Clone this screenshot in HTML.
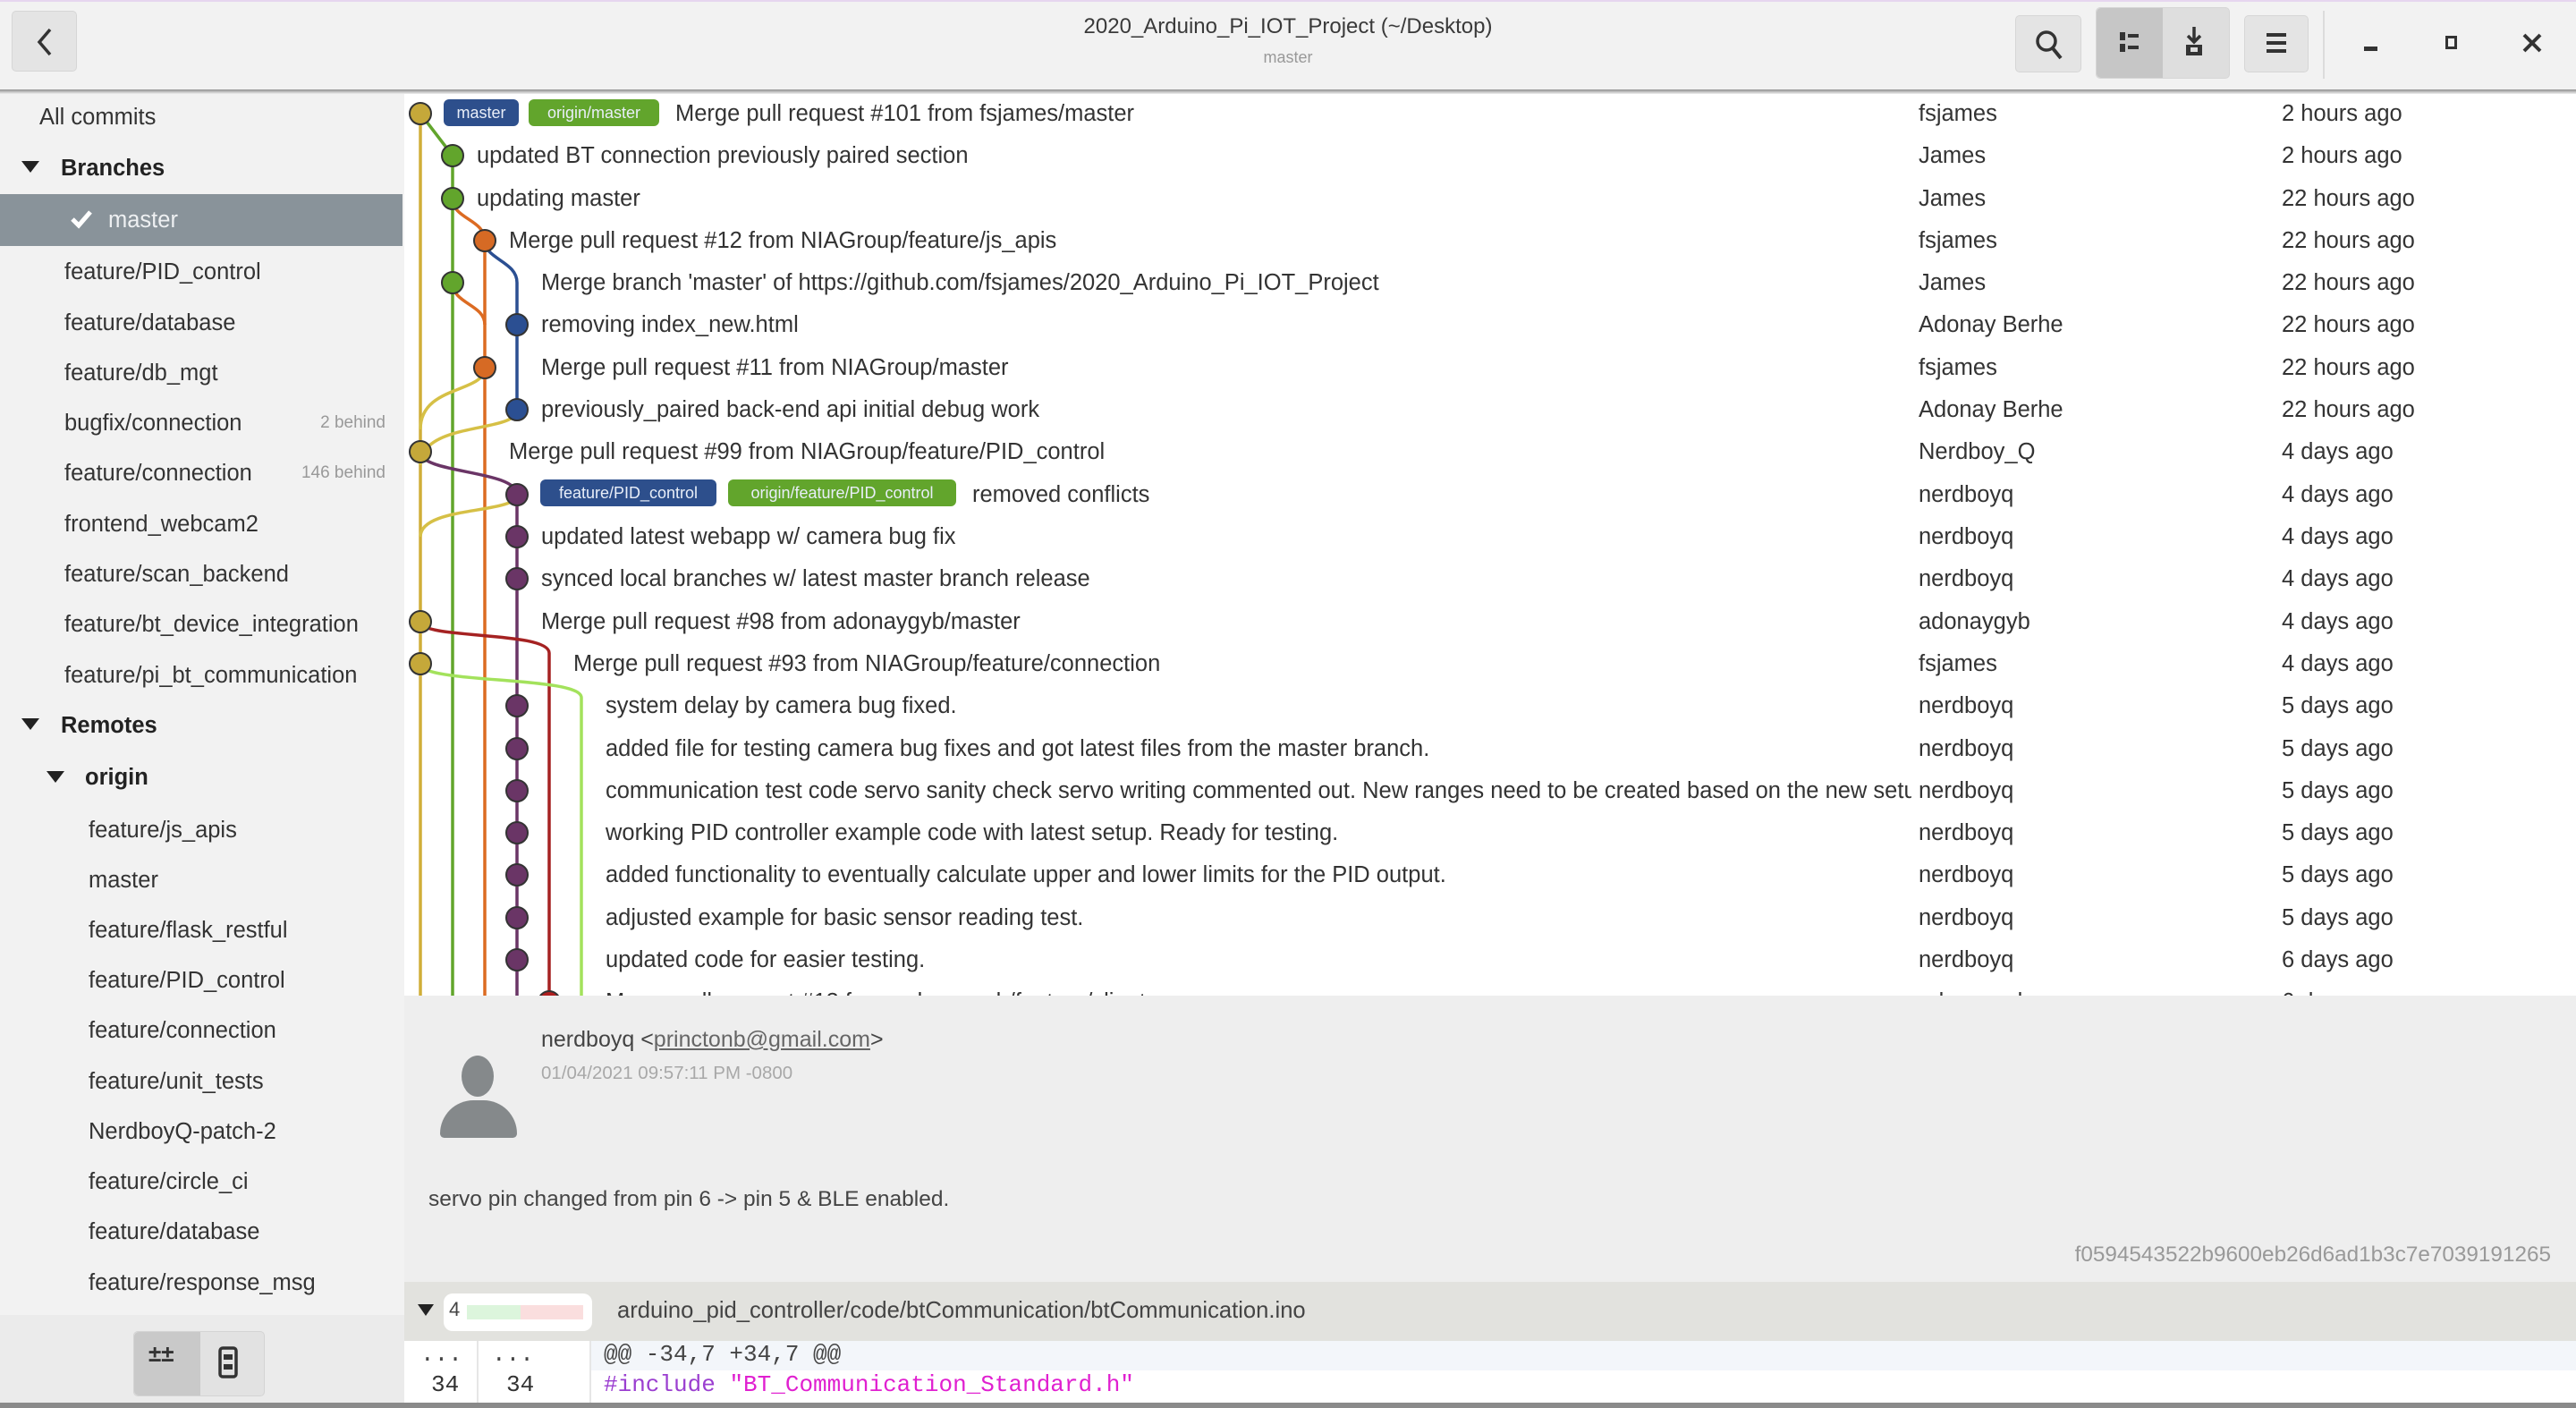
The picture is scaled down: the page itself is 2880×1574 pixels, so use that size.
<!DOCTYPE html>
<html><head><meta charset="utf-8"><style>
*{margin:0;padding:0;box-sizing:border-box}
body{width:2880px;height:1574px;overflow:hidden;background:#fff;font-family:"Liberation Sans",sans-serif;color:#333;position:relative}
.a{position:absolute;white-space:nowrap}
.hdr{left:0;top:0;width:2880px;height:101px;background:#f2f2f2;border-top:2px solid #e6d6ef}
.sep{left:0;top:100px;width:2880px;height:5px;background:linear-gradient(#8f8f8f,#c8c8c8 60%,#efefef)}
.btn{background:#e4e4e4;border:1px solid #d6d6d6;border-radius:5px}
.side{left:0;top:105px;width:452px;height:1469px;background:#f2f2f2}
.si{font-size:25.5px;line-height:40px;color:#333}
.row{font-size:25.5px;line-height:40px;color:#333}
.pill{font-size:18px;color:#e8eef8;border-radius:6px;line-height:30px;padding:0 10px;text-align:center}
</style></head><body>
<div class="a hdr"></div>
<div class="a btn" style="left:13px;top:12px;width:73px;height:68px"></div>
<svg class="a" style="left:38px;top:30px" width="24" height="34"><path d="M18 3 L6 17 L18 31" stroke="#333" stroke-width="3.5" fill="none"/></svg>
<div class="a" style="left:1000px;top:16px;width:880px;text-align:center;font-size:24px;color:#3a3a3a">2020_Arduino_Pi_IOT_Project (~/Desktop)</div>
<div class="a" style="left:1000px;top:54px;width:880px;text-align:center;font-size:18px;color:#999">master</div>
<div class="a btn" style="left:2253px;top:17px;width:74px;height:64px"></div>
<svg class="a" style="left:2274px;top:32px" width="34" height="36"><circle cx="14" cy="14" r="10" stroke="#333" stroke-width="3.5" fill="none"/><path d="M21 22 L30 33" stroke="#333" stroke-width="4"/></svg>
<div class="a btn" style="left:2343px;top:8px;width:150px;height:80px;background:#dedede"></div>
<div class="a" style="left:2344px;top:9px;width:74px;height:78px;background:#c6c6c6;border-radius:5px 0 0 5px"></div>
<svg class="a" style="left:2367px;top:34px" width="30" height="28"><rect x="3" y="2" width="6" height="9" fill="#333"/><rect x="12" y="4" width="12" height="4" fill="#333"/><rect x="3" y="15" width="6" height="9" fill="#333"/><rect x="12" y="17" width="12" height="4" fill="#333"/></svg>
<svg class="a" style="left:2440px;top:28px" width="30" height="40"><path d="M13 2 V18 M6 12 L13 19 L20 12" stroke="#333" stroke-width="3.5" fill="none"/><rect x="4" y="22" width="18" height="12" fill="#333"/><rect x="9" y="25" width="8" height="5" fill="#ddd"/></svg>
<div class="a btn" style="left:2509px;top:17px;width:72px;height:64px"></div>
<svg class="a" style="left:2532px;top:35px" width="28" height="28"><rect x="2" y="2" width="22" height="4" fill="#333"/><rect x="2" y="11" width="22" height="4" fill="#333"/><rect x="2" y="20" width="22" height="4" fill="#333"/></svg>
<div class="a" style="left:2597px;top:12px;width:2px;height:76px;background:#dcdcdc"></div>
<div class="a" style="left:2643px;top:52px;width:15px;height:5px;background:#333"></div>
<div class="a" style="left:2734px;top:40px;width:13px;height:15px;border:3px solid #333"></div>
<svg class="a" style="left:2819px;top:36px" width="24" height="24"><path d="M3 3 L21 21 M21 3 L3 21" stroke="#333" stroke-width="4"/></svg>
<div class="a sep"></div>

<div class="a side"></div>
<div class="a" style="left:0;top:217px;width:450px;height:58px;background:#89939a"></div>
<div class="a" style="left:0;top:1470px;width:452px;height:104px;background:#ebebeb"></div>
<div class="a" style="left:149px;top:1488px;width:147px;height:73px;background:#e2e2e2;border:1px solid #d4d4d4;border-radius:5px"></div>
<div class="a" style="left:150px;top:1489px;width:74px;height:71px;background:#c9c9c9;border-radius:5px 0 0 5px"></div>
<div class="a" style="left:166px;top:1502px;font-size:26px;font-weight:bold;color:#333;line-height:22px">±±</div>
<svg class="a" style="left:244px;top:1505px" width="22" height="38"><rect x="2" y="2" width="18" height="32" rx="3" stroke="#333" stroke-width="3.5" fill="none"/><rect x="6" y="9" width="10" height="6" fill="#333"/><rect x="6" y="20" width="10" height="6" fill="#333"/></svg>

<div class="a si" style="left:44px;top:111px">All commits</div>
<svg class="a" style="left:24px;top:180px" width="20" height="14"><path d="M0 0 H20 L10 13Z" fill="#222"/></svg>
<div class="a si" style="left:68px;top:168px;font-weight:bold;color:#222">Branches</div>
<svg class="a" style="left:78px;top:233px" width="26" height="24"><path d="M3 12 L10 19 L23 4" stroke="#fff" stroke-width="5" fill="none"/></svg>
<div class="a si" style="left:121px;top:226px;color:#eef0f2">master</div>
<div class="a si" style="left:72px;top:284px">feature/PID_control</div>
<div class="a si" style="left:72px;top:341px">feature/database</div>
<div class="a si" style="left:72px;top:397px">feature/db_mgt</div>
<div class="a si" style="left:72px;top:453px">bugfix/connection</div>
<div class="a" style="left:300px;top:453px;width:131px;text-align:right;font-size:19px;line-height:40px;color:#999">2 behind</div>
<div class="a si" style="left:72px;top:509px">feature/connection</div>
<div class="a" style="left:300px;top:509px;width:131px;text-align:right;font-size:19px;line-height:40px;color:#999">146 behind</div>
<div class="a si" style="left:72px;top:566px">frontend_webcam2</div>
<div class="a si" style="left:72px;top:622px">feature/scan_backend</div>
<div class="a si" style="left:72px;top:678px">feature/bt_device_integration</div>
<div class="a si" style="left:72px;top:735px">feature/pi_bt_communication</div>
<svg class="a" style="left:24px;top:803px" width="20" height="14"><path d="M0 0 H20 L10 13Z" fill="#222"/></svg>
<div class="a si" style="left:68px;top:791px;font-weight:bold;color:#222">Remotes</div>
<svg class="a" style="left:52px;top:862px" width="20" height="14"><path d="M0 0 H20 L10 13Z" fill="#222"/></svg>
<div class="a si" style="left:95px;top:849px;font-weight:bold;color:#222">origin</div>
<div class="a si" style="left:99px;top:908px">feature/js_apis</div>
<div class="a si" style="left:99px;top:964px">master</div>
<div class="a si" style="left:99px;top:1020px">feature/flask_restful</div>
<div class="a si" style="left:99px;top:1076px">feature/PID_control</div>
<div class="a si" style="left:99px;top:1132px">feature/connection</div>
<div class="a si" style="left:99px;top:1189px">feature/unit_tests</div>
<div class="a si" style="left:99px;top:1245px">NerdboyQ-patch-2</div>
<div class="a si" style="left:99px;top:1301px">feature/circle_ci</div>
<div class="a si" style="left:99px;top:1357px">feature/database</div>
<div class="a si" style="left:99px;top:1414px">feature/response_msg</div>

<div class="a" style="left:452px;top:105px;width:2428px;height:1008px;background:#fff;overflow:hidden">
<svg width="2428" height="1008" viewBox="452 105 2428 1008" style="position:absolute;left:0;top:0">
<g fill="none" stroke-width="3.5">
<path d="M470 127 V1113" stroke="#d0ae38"/>
<path d="M470 127 L506 174 V1113" stroke="#62a52c"/>
<path d="M506 222 C506 245,542 245,542 269 V1113" stroke="#dc6b22"/>
<path d="M542 269 C542 290,578 292,578 316 V458" stroke="#2b4f92"/>
<path d="M506 316 C506 340,542 340,542 363" stroke="#dc6b22"/>
<path d="M542 411 C542 440,470 430,470 480" stroke="#d6c046"/>
<path d="M578 458 C578 485,470 470,470 520" stroke="#d6c046"/>
<path d="M470 505 C470 530,578 525,578 553 V1113" stroke="#6a3566"/>
<path d="M578 553 C578 575,470 565,470 600" stroke="#d6c046"/>
<path d="M470 695 C470 715,614 705,614 730 V1113" stroke="#a52222"/>
<path d="M470 742 C470 765,650 755,650 780 V1113" stroke="#a3e25c"/>
</g>
<g stroke="#333" stroke-width="2">
<circle cx="470" cy="127" r="12" fill="#c5a83a"/>
<circle cx="506" cy="174" r="12" fill="#62a52c"/>
<circle cx="506" cy="222" r="12" fill="#62a52c"/>
<circle cx="542" cy="269" r="12" fill="#d66a24"/>
<circle cx="506" cy="316" r="12" fill="#62a52c"/>
<circle cx="578" cy="363" r="12" fill="#2b4f92"/>
<circle cx="542" cy="411" r="12" fill="#d66a24"/>
<circle cx="578" cy="458" r="12" fill="#2b4f92"/>
<circle cx="470" cy="505" r="12" fill="#c5a83a"/>
<circle cx="578" cy="553" r="12" fill="#6a3566"/>
<circle cx="578" cy="600" r="12" fill="#6a3566"/>
<circle cx="578" cy="647" r="12" fill="#6a3566"/>
<circle cx="470" cy="695" r="12" fill="#c5a83a"/>
<circle cx="470" cy="742" r="12" fill="#c5a83a"/>
<circle cx="578" cy="789" r="12" fill="#6a3566"/>
<circle cx="578" cy="837" r="12" fill="#6a3566"/>
<circle cx="578" cy="884" r="12" fill="#6a3566"/>
<circle cx="578" cy="931" r="12" fill="#6a3566"/>
<circle cx="578" cy="978" r="12" fill="#6a3566"/>
<circle cx="578" cy="1026" r="12" fill="#6a3566"/>
<circle cx="578" cy="1073" r="12" fill="#6a3566"/>
<circle cx="614" cy="1120" r="12" fill="#b02020"/>
</g>
</svg>
</div>

<div class="a pill" style="left:496px;top:111px;width:84px;background:#2d4f8c">master</div>
<div class="a pill" style="left:591px;top:111px;width:146px;background:#62a52c">origin/master</div>
<div class="a pill" style="left:604px;top:536px;width:197px;background:#2d4f8c">feature/PID_control</div>
<div class="a pill" style="left:814px;top:536px;width:255px;background:#62a52c">origin/feature/PID_control</div>

<div class="a" style="left:0;top:0;width:2137px;height:1113px;overflow:hidden">
<div class="a row" style="left:755px;top:107px">Merge pull request #101 from fsjames/master</div>
<div class="a row" style="left:533px;top:154px">updated BT connection previously paired section</div>
<div class="a row" style="left:533px;top:202px">updating master</div>
<div class="a row" style="left:569px;top:249px">Merge pull request #12 from NIAGroup/feature/js_apis</div>
<div class="a row" style="left:605px;top:296px">Merge branch 'master' of https://github.com/fsjames/2020_Arduino_Pi_IOT_Project</div>
<div class="a row" style="left:605px;top:343px">removing index_new.html</div>
<div class="a row" style="left:605px;top:391px">Merge pull request #11 from NIAGroup/master</div>
<div class="a row" style="left:605px;top:438px">previously_paired back-end api initial debug work</div>
<div class="a row" style="left:569px;top:485px">Merge pull request #99 from NIAGroup/feature/PID_control</div>
<div class="a row" style="left:1087px;top:533px">removed conflicts</div>
<div class="a row" style="left:605px;top:580px">updated latest webapp w/ camera bug fix</div>
<div class="a row" style="left:605px;top:627px">synced local branches w/ latest master branch release</div>
<div class="a row" style="left:605px;top:675px">Merge pull request #98 from adonaygyb/master</div>
<div class="a row" style="left:641px;top:722px">Merge pull request #93 from NIAGroup/feature/connection</div>
<div class="a row" style="left:677px;top:769px">system delay by camera bug fixed.</div>
<div class="a row" style="left:677px;top:817px">added file for testing camera bug fixes and got latest files from the master branch.</div>
<div class="a row" style="left:677px;top:864px">communication test code servo sanity check servo writing commented out. New ranges need to be created based on the new setup</div>
<div class="a row" style="left:677px;top:911px">working PID controller example code with latest setup. Ready for testing.</div>
<div class="a row" style="left:677px;top:958px">added functionality to eventually calculate upper and lower limits for the PID output.</div>
<div class="a row" style="left:677px;top:1006px">adjusted example for basic sensor reading test.</div>
<div class="a row" style="left:677px;top:1053px">updated code for easier testing.</div>
<div class="a row" style="left:677px;top:1100px">Merge pull request #13 from adonaygyb/feature/client_ws</div>
</div>
<div class="a" style="left:2145px;top:0;width:735px;height:1113px;overflow:hidden">
<div class="a row" style="left:0;top:107px">fsjames</div><div class="a row" style="left:406px;top:107px">2 hours ago</div>
<div class="a row" style="left:0;top:154px">James</div><div class="a row" style="left:406px;top:154px">2 hours ago</div>
<div class="a row" style="left:0;top:202px">James</div><div class="a row" style="left:406px;top:202px">22 hours ago</div>
<div class="a row" style="left:0;top:249px">fsjames</div><div class="a row" style="left:406px;top:249px">22 hours ago</div>
<div class="a row" style="left:0;top:296px">James</div><div class="a row" style="left:406px;top:296px">22 hours ago</div>
<div class="a row" style="left:0;top:343px">Adonay Berhe</div><div class="a row" style="left:406px;top:343px">22 hours ago</div>
<div class="a row" style="left:0;top:391px">fsjames</div><div class="a row" style="left:406px;top:391px">22 hours ago</div>
<div class="a row" style="left:0;top:438px">Adonay Berhe</div><div class="a row" style="left:406px;top:438px">22 hours ago</div>
<div class="a row" style="left:0;top:485px">Nerdboy_Q</div><div class="a row" style="left:406px;top:485px">4 days ago</div>
<div class="a row" style="left:0;top:533px">nerdboyq</div><div class="a row" style="left:406px;top:533px">4 days ago</div>
<div class="a row" style="left:0;top:580px">nerdboyq</div><div class="a row" style="left:406px;top:580px">4 days ago</div>
<div class="a row" style="left:0;top:627px">nerdboyq</div><div class="a row" style="left:406px;top:627px">4 days ago</div>
<div class="a row" style="left:0;top:675px">adonaygyb</div><div class="a row" style="left:406px;top:675px">4 days ago</div>
<div class="a row" style="left:0;top:722px">fsjames</div><div class="a row" style="left:406px;top:722px">4 days ago</div>
<div class="a row" style="left:0;top:769px">nerdboyq</div><div class="a row" style="left:406px;top:769px">5 days ago</div>
<div class="a row" style="left:0;top:817px">nerdboyq</div><div class="a row" style="left:406px;top:817px">5 days ago</div>
<div class="a row" style="left:0;top:864px">nerdboyq</div><div class="a row" style="left:406px;top:864px">5 days ago</div>
<div class="a row" style="left:0;top:911px">nerdboyq</div><div class="a row" style="left:406px;top:911px">5 days ago</div>
<div class="a row" style="left:0;top:958px">nerdboyq</div><div class="a row" style="left:406px;top:958px">5 days ago</div>
<div class="a row" style="left:0;top:1006px">nerdboyq</div><div class="a row" style="left:406px;top:1006px">5 days ago</div>
<div class="a row" style="left:0;top:1053px">nerdboyq</div><div class="a row" style="left:406px;top:1053px">6 days ago</div>
<div class="a row" style="left:0;top:1100px">adonaygyb</div><div class="a row" style="left:406px;top:1100px">6 days ago</div>
</div>

<div class="a" style="left:452px;top:1113px;width:2428px;height:320px;background:#eeeeee"></div>
<div class="a" style="left:516px;top:1180px;width:36px;height:46px;border-radius:50%;background:#85898b"></div>
<div class="a" style="left:492px;top:1230px;width:86px;height:42px;border-radius:40px 40px 5px 5px;background:#85898b"></div>
<div class="a" style="left:605px;top:1148px;font-size:25px;color:#444">nerdboyq &lt;<span style="text-decoration:underline;color:#666">princtonb@gmail.com</span>&gt;</div>
<div class="a" style="left:605px;top:1188px;font-size:20.5px;color:#a8a8a8">01/04/2021 09:57:11 PM -0800</div>
<div class="a" style="left:479px;top:1327px;font-size:24.5px;color:#444">servo pin changed from pin 6 -&gt; pin 5 &amp; BLE enabled.</div>
<div class="a" style="left:2000px;top:1389px;width:852px;text-align:right;font-size:24.3px;color:#999">f0594543522b9600eb26d6ad1b3c7e7039191265</div>

<div class="a" style="left:452px;top:1433px;width:2428px;height:66px;background:#e2e2de"></div>
<svg class="a" style="left:467px;top:1458px" width="18" height="14"><path d="M0 0 H18 L9 13Z" fill="#222"/></svg>
<div class="a" style="left:496px;top:1446px;width:166px;height:42px;background:#fff;border-radius:10px"></div>
<div class="a" style="left:502px;top:1451px;font-size:22px;color:#444">4</div>
<div class="a" style="left:522px;top:1459px;width:60px;height:16px;background:#dcf5dc"></div>
<div class="a" style="left:582px;top:1459px;width:70px;height:16px;background:#fadede"></div>
<div class="a" style="left:690px;top:1451px;font-size:25.6px;color:#444">arduino_pid_controller/code/btCommunication/btCommunication.ino</div>

<div class="a" style="left:452px;top:1499px;width:2428px;height:33px;background:#f3f6fa"></div>
<div class="a" style="left:452px;top:1532px;width:2428px;height:36px;background:#fff"></div>
<div class="a" style="left:452px;top:1499px;width:208px;height:69px;background:#fff"></div>
<div class="a" style="left:533px;top:1499px;width:2px;height:69px;background:#e6e6e6"></div>
<div class="a" style="left:659px;top:1499px;width:2px;height:69px;background:#e6e6e6"></div>
<div class="a" style="left:0;top:1568px;width:2880px;height:6px;background:#8a8a8a"></div>
<div style="font-family:'Liberation Mono',monospace;font-size:26px">
<div class="a" style="left:470px;top:1499px;color:#444">...</div>
<div class="a" style="left:550px;top:1499px;color:#444">...</div>
<div class="a" style="left:482px;top:1533px;color:#333">34</div>
<div class="a" style="left:566px;top:1533px;color:#333">34</div>
<div class="a" style="left:675px;top:1499px;color:#444">@@ -34,7 +34,7 @@</div>
<div class="a" style="left:675px;top:1533px;color:#9b3fd0">#include <span style="color:#e020d0">"BT_Communication_Standard.h"</span></div>
</div>
</body></html>
